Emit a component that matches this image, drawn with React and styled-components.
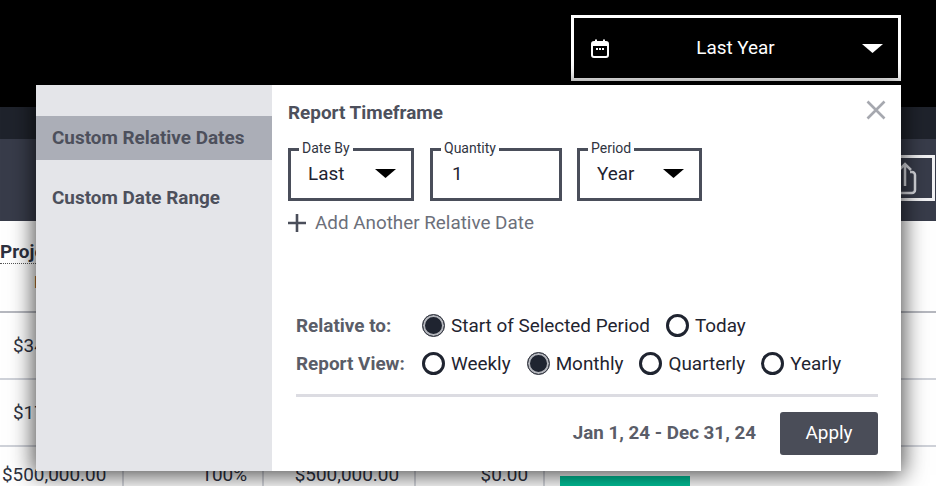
import styled, { createGlobalStyle } from "styled-components";

const relativeOptions = [
  { label: "Start of Selected Period", checked: true },
  { label: "Today" },
];

const viewOptions = [
  { label: "Weekly" },
  { label: "Monthly", checked: true },
  { label: "Quarterly" },
  { label: "Yearly" },
];

const rows = ["$345,000.00", "$175,000.00"];

function Caret({ color }) {
  return (
    <CaretIcon width="21" height="9" viewBox="0 0 21 9">
      <polygon points="0,0 21,0 10.5,9" fill={color} />
    </CaretIcon>
  );
}

function RadioOption({ label, checked }) {
  return (
    <Option>
      <Radio $checked={checked} />
      {label}
    </Option>
  );
}

function App() {
  return (
    <Page>
      <GlobalStyle />
      <Header>
        <RangeButton>
          <svg width="18" height="19" viewBox="0 0 18 19" fill="none">
            <rect x="1" y="3" width="16" height="15" rx="2" stroke="#fff" strokeWidth="2" />
            <rect x="1" y="3" width="16" height="4" fill="#fff" />
            <path d="M5 0.5v3M13 0.5v3" stroke="#fff" strokeWidth="2" />
            <path d="M5 10h2M8 10h2M11 10h2" stroke="#fff" strokeWidth="2" />
          </svg>
          <RangeLabel>Last Year</RangeLabel>
          <Caret color="#fff" />
        </RangeButton>
      </Header>
      <SubBar />
      <Toolbar>
        <ExportButton>
          <svg width="24" height="33" viewBox="0 0 24 33" fill="none" stroke="#d9dae0" strokeWidth="2.5">
            <path d="M7 10h-5v18a3 3 0 0 0 3 3h14a3 3 0 0 0 3-3v-15a3 3 0 0 0-3-3h-2" />
            <path d="M12 24v-21M6 8l6-6 6 6" />
          </svg>
        </ExportButton>
      </Toolbar>
      <TableHead>
        <HeadTitle>Project Budget</HeadTitle>
        <HeadSub>Budget</HeadSub>
      </TableHead>
      {rows.map((amount) => (
        <Row key={amount}>
          <FirstCell>{amount}</FirstCell>
        </Row>
      ))}
      <Row>
        <TotalCell>$500,000.00</TotalCell>
        <Cell>100%</Cell>
        <Cell>$500,000.00</Cell>
        <Cell>$0.00</Cell>
        <BarCell>
          <GreenBar />
        </BarCell>
      </Row>

      <Popover>
        <Sidebar>
          <SideItem $active>Custom Relative Dates</SideItem>
          <SideItem>Custom Date Range</SideItem>
        </Sidebar>
        <Main>
          <TitleRow>
            <Title>Report Timeframe</Title>
            <CloseIcon width="20" height="20" viewBox="0 0 20 20">
              <path d="M1.5 1.5l17 17M18.5 1.5l-17 17" stroke="#a6a8af" strokeWidth="2.6" />
            </CloseIcon>
          </TitleRow>
          <Fields>
            <Field $width={126}>
              <FieldLabel>Date By</FieldLabel>
              Last
              <Caret color="#000" />
            </Field>
            <Field $width={132} $gapAfter={15}>
              <FieldLabel>Quantity</FieldLabel>
              <QuantityValue>1</QuantityValue>
            </Field>
            <Field $width={125}>
              <FieldLabel>Period</FieldLabel>
              Year
              <Caret color="#000" />
            </Field>
          </Fields>
          <AddRow>
            <svg width="18" height="18" viewBox="0 0 18 18">
              <path d="M9 0v18M0 9h18" stroke="#4a4e5a" strokeWidth="2.6" />
            </svg>
            Add Another Relative Date
          </AddRow>
          <Bottom>
            <OptionRow>
              <RowLabel>Relative to:</RowLabel>
              {relativeOptions.map((o) => (
                <RadioOption key={o.label} {...o} />
              ))}
            </OptionRow>
            <OptionRow>
              <RowLabel>Report View:</RowLabel>
              {viewOptions.map((o) => (
                <RadioOption key={o.label} {...o} />
              ))}
            </OptionRow>
            <Footer>
              <DateText>Jan 1, 24 - Dec 31, 24</DateText>
              <ApplyButton>Apply</ApplyButton>
            </Footer>
          </Bottom>
        </Main>
      </Popover>
    </Page>
  );
}

export default App;

const GlobalStyle = createGlobalStyle`
  html, body {
    margin: 0;
    background: #fff;
  }
  body {
    font-family: Roboto, "Liberation Sans", sans-serif;
  }
`;

const Page = styled.div`
  position: relative;
  width: 936px;
  height: 486px;
  overflow: hidden;
  background: #fff;
`;

const Header = styled.div`
  display: flex;
  justify-content: flex-end;
  height: 107px;
  padding: 15px 35px 0 0;
  box-sizing: border-box;
  background: #000;
`;

const RangeButton = styled.div`
  display: flex;
  align-items: center;
  width: 330px;
  height: 66px;
  padding: 0 15px 0 17px;
  box-sizing: border-box;
  border: 3px solid #fff;
  color: #fff;
  font-size: 18.9px;
`;

const RangeLabel = styled.span`
  flex: 1;
  text-align: center;
  padding-bottom: 2px;
`;

const CaretIcon = styled.svg`
  flex: none;
`;

const SubBar = styled.div`
  height: 32px;
  background: #1f232c;
`;

const Toolbar = styled.div`
  display: flex;
  justify-content: flex-end;
  align-items: flex-start;
  height: 82px;
  padding: 16px 1px 0 0;
  box-sizing: border-box;
  background: #383c4a;
`;

const ExportButton = styled.div`
  display: flex;
  align-items: center;
  justify-content: center;
  width: 60px;
  height: 46px;
  box-sizing: border-box;
  border: 3px solid #f2f2f4;
`;

const TableHead = styled.div`
  height: 92px;
  box-sizing: border-box;
  padding-top: 20px;
  border-bottom: 2px solid #b6b8bf;
  color: #2d3140;
`;

const HeadTitle = styled.div`
  width: fit-content;
  font-size: 18.9px;
  font-weight: 700;
  line-height: 22px;
  white-space: nowrap;
  border-bottom: 1px dotted #555;
`;

const HeadSub = styled.div`
  margin: 10px 0 0 34px;
  font-size: 16px;
  line-height: 18px;
  color: #5a4326;
`;

const Row = styled.div`
  display: grid;
  grid-template-columns: 124px 140px 152px 129px 1fr;
  height: 67px;
  box-sizing: border-box;
  border-bottom: 2px solid #cfd2d9;
  color: #2d3140;
  font-size: 18.9px;
`;

const Cell = styled.div`
  display: flex;
  align-items: center;
  justify-content: flex-end;
  padding: 0 15px 14px 0;
  border-right: 2px solid #d4d6dc;
`;

const FirstCell = styled.div`
  display: flex;
  align-items: center;
  padding-left: 13px;
  white-space: nowrap;
`;

const TotalCell = styled(FirstCell)`
  padding: 0 0 14px 2px;
  border-right: 2px solid #d4d6dc;
`;

const BarCell = styled.div`
  padding: 29px 0 0 15px;
`;

const GreenBar = styled.div`
  width: 130px;
  height: 40px;
  background: #00c49a;
`;

const Popover = styled.div`
  position: absolute;
  top: 85px;
  left: 36px;
  display: flex;
  width: 865px;
  height: 386px;
  background: #fff;
  box-shadow: 0 2px 22px 2px rgba(0, 0, 0, 0.72);
`;

const Sidebar = styled.div`
  display: flex;
  flex-direction: column;
  gap: 16px;
  flex: none;
  width: 236px;
  padding-top: 31px;
  box-sizing: border-box;
  background: #e4e5e9;
`;

const SideItem = styled.div`
  height: 44px;
  padding-left: 16px;
  line-height: 44px;
  font-size: 18.9px;
  font-weight: 700;
  color: #4d505c;
  background: ${(p) => (p.$active ? "#abaeb7" : "transparent")};
`;

const Main = styled.div`
  display: flex;
  flex-direction: column;
  flex: 1;
  padding: 18px 23px 16px 16px;
  box-sizing: border-box;
`;

const TitleRow = styled.div`
  display: flex;
  justify-content: space-between;
  align-items: flex-start;
  margin-right: -8px;
`;

const Title = styled.div`
  font-size: 18.9px;
  font-weight: 700;
  line-height: 20px;
  color: #4d505c;
`;

const CloseIcon = styled.svg`
  margin-top: -3px;
`;

const Fields = styled.div`
  display: flex;
  margin-top: 25px;
`;

const Field = styled.div`
  position: relative;
  display: flex;
  align-items: center;
  justify-content: space-between;
  flex: none;
  width: ${(p) => p.$width}px;
  height: 53px;
  margin-right: ${(p) => p.$gapAfter ?? 16}px;
  padding: 0 15px 2px 17px;
  box-sizing: border-box;
  border: 3px solid #4a4e5a;
  color: #1f2430;
  font-size: 18.9px;
`;

const FieldLabel = styled.span`
  position: absolute;
  top: -11px;
  left: 8px;
  padding: 0 3px;
  background: #fff;
  font-size: 14px;
  line-height: 16px;
  color: #30343f;
`;

const QuantityValue = styled.span`
  padding-left: 2px;
`;

const AddRow = styled.div`
  display: flex;
  align-items: center;
  gap: 9px;
  margin-top: 12px;
  font-size: 18.85px;
  line-height: 20px;
  color: #6c6f7a;
`;

const Bottom = styled.div`
  margin-top: auto;
  padding-left: 8px;
`;

const OptionRow = styled.div`
  display: flex;
  align-items: center;
  gap: 16px;
  height: 38px;
`;

const RowLabel = styled.div`
  flex: none;
  width: 110px;
  font-size: 18.9px;
  font-weight: 700;
  color: #5a5d68;
`;

const Option = styled.div`
  display: flex;
  align-items: center;
  gap: 6px;
  font-size: 18.9px;
  color: #1f2430;
  white-space: nowrap;
`;

const Radio = styled.span`
  flex: none;
  width: 23px;
  height: 23px;
  box-sizing: border-box;
  border-radius: 50%;
  border: ${(p) => (p.$checked ? "1px solid #3a3d47" : "3px solid #1f2430")};
  background: ${(p) => (p.$checked ? "#1f2430" : "#fff")};
  box-shadow: ${(p) => (p.$checked ? "inset 0 0 0 2px #b5b7bd" : "none")};
`;

const Footer = styled.div`
  display: flex;
  justify-content: flex-end;
  align-items: center;
  gap: 24px;
  margin-top: 12px;
  padding-top: 15px;
  border-top: 3px solid #dcdce2;
`;

const DateText = styled.div`
  margin-bottom: 2px;
  font-size: 18.8px;
  font-weight: 700;
  color: #5a5d68;
`;

const ApplyButton = styled.div`
  width: 98px;
  height: 43px;
  line-height: 41px;
  text-align: center;
  border-radius: 3px;
  background: #4a4d58;
  color: #fff;
  font-size: 18.9px;
`;
